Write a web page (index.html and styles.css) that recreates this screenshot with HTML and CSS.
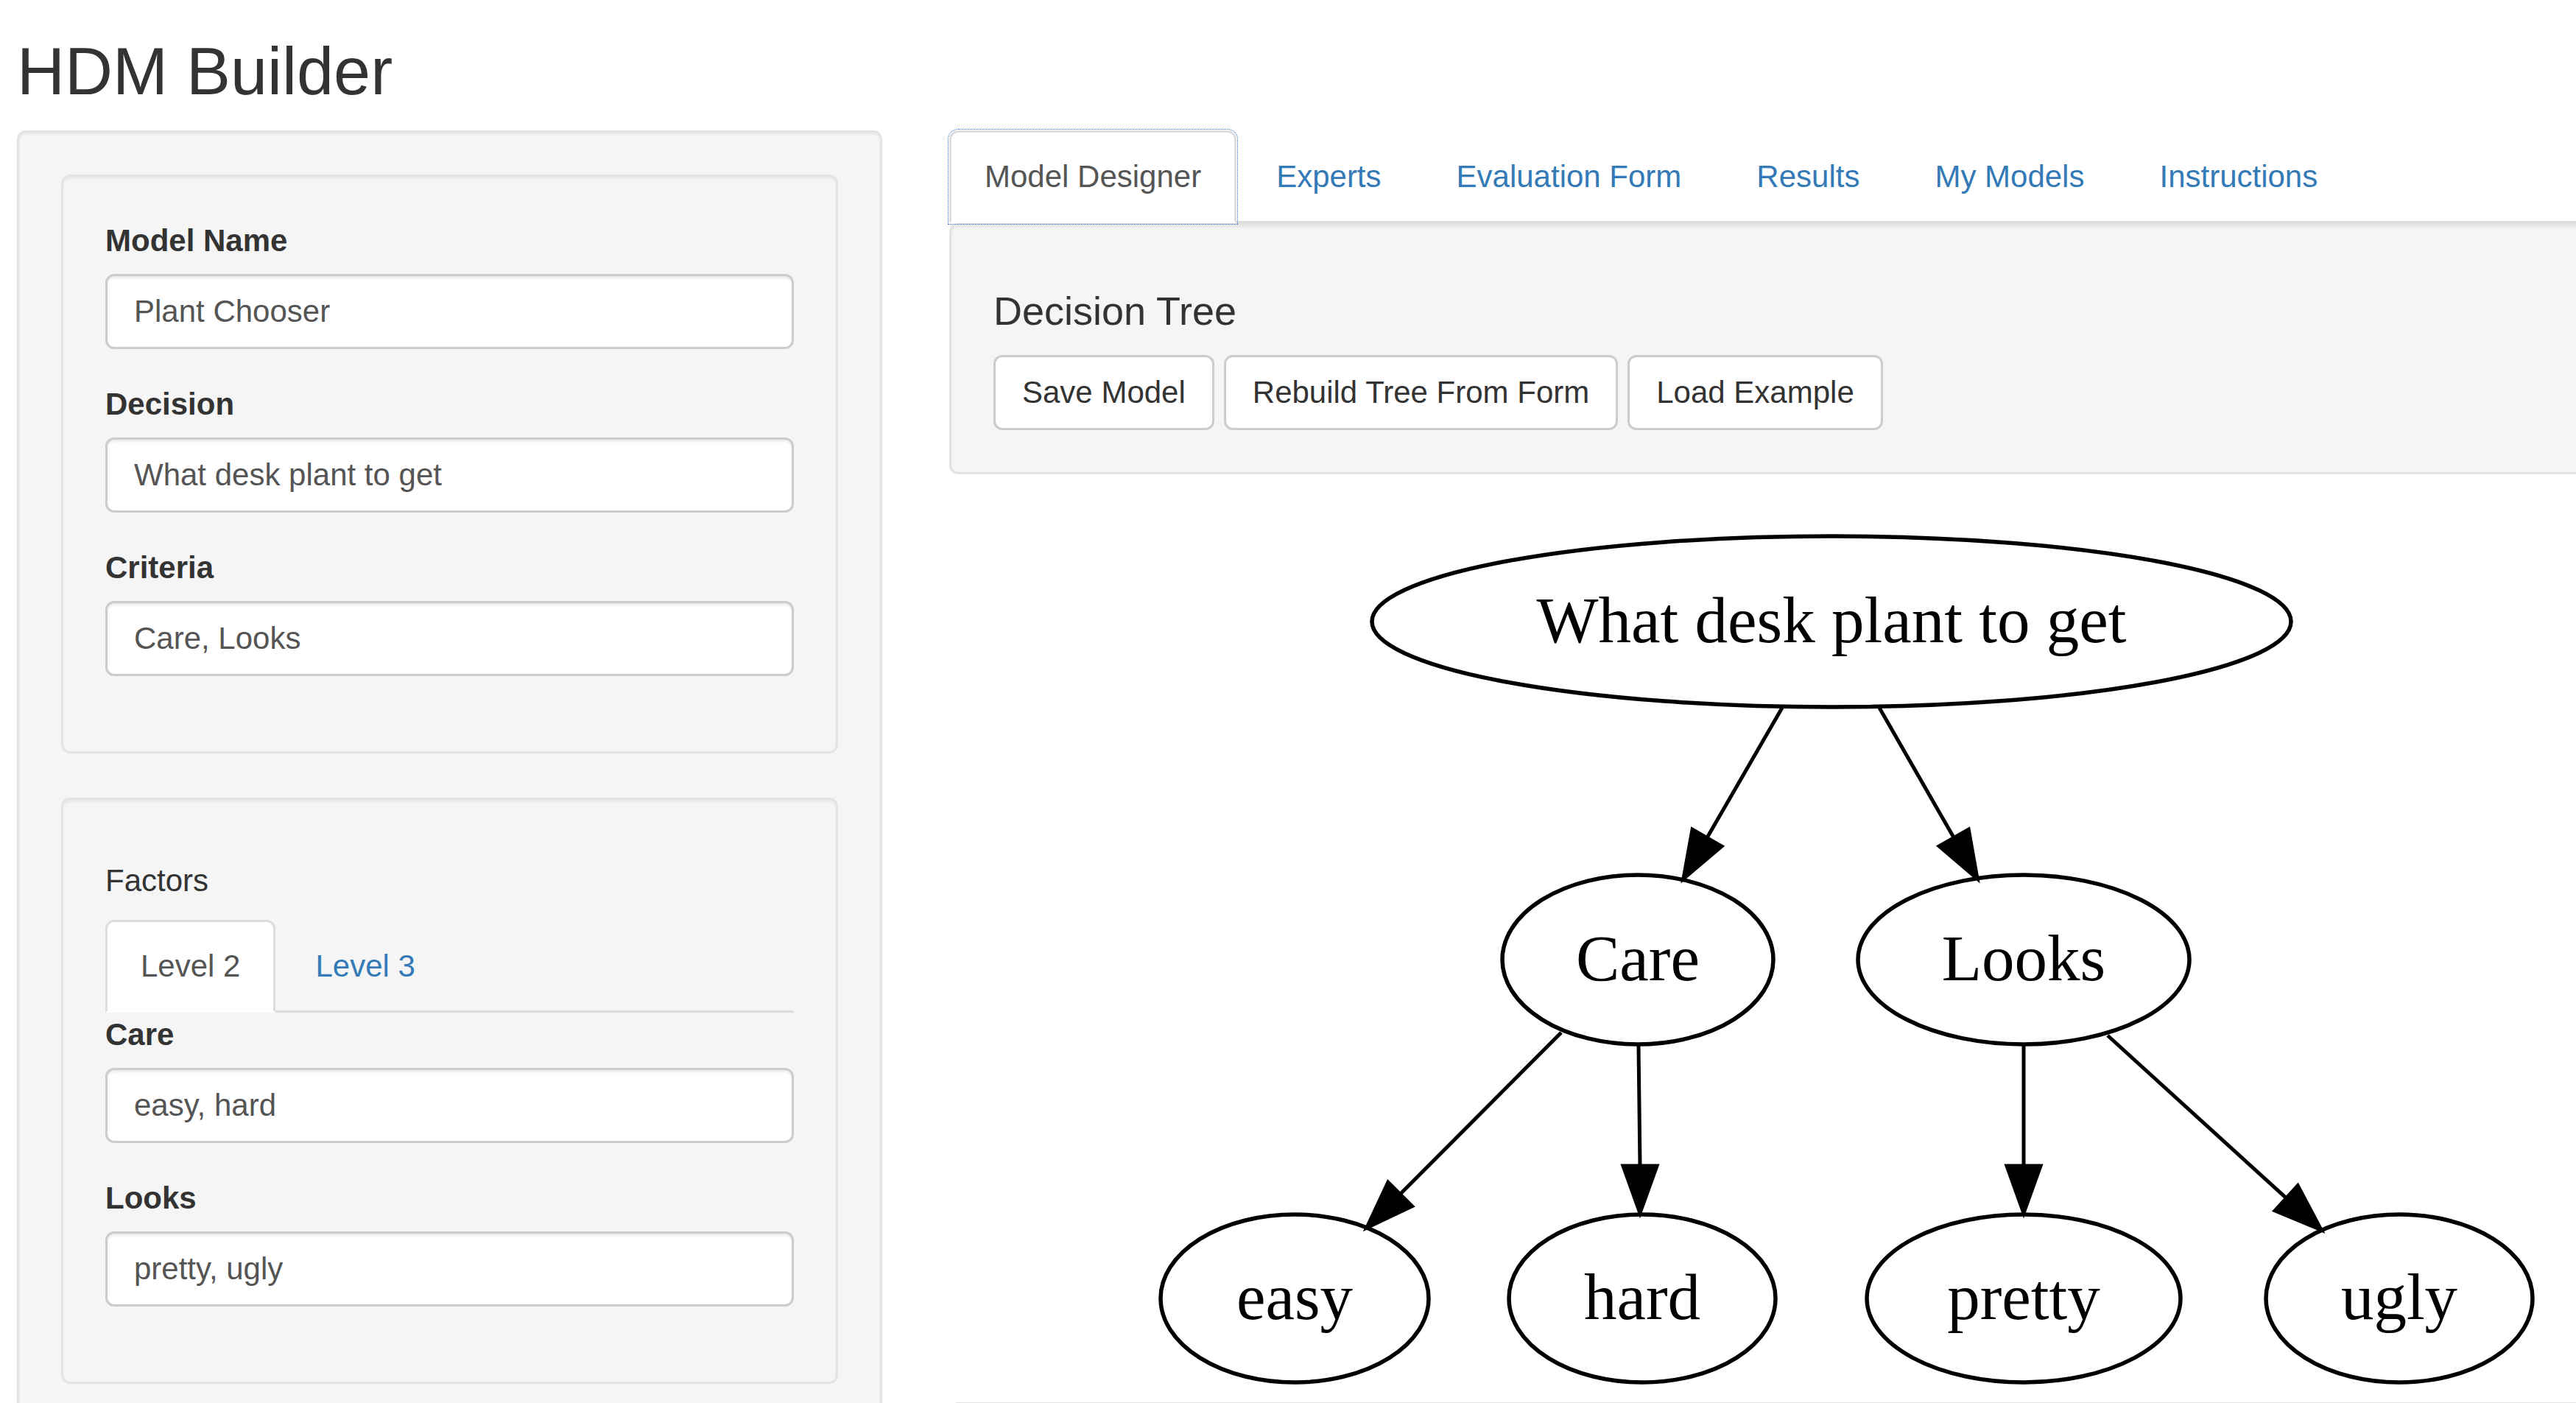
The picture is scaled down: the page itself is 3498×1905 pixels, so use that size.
FILE: index.html
```html
<!DOCTYPE html>
<html lang="en">
<head>
<meta charset="utf-8">
<title>HDM Builder</title>
<link rel="stylesheet" href="styles.css">
</head>
<body>
<div class="page">
  <h2 class="title">HDM Builder</h2>
  <div class="layout">
    <aside class="well sidebar">
      <div class="well inner-well">
        <div class="form-group">
          <label class="control-label">Model Name</label>
          <input class="form-control" type="text" value="Plant Chooser">
        </div>
        <div class="form-group">
          <label class="control-label">Decision</label>
          <input class="form-control" type="text" value="What desk plant to get">
        </div>
        <div class="form-group">
          <label class="control-label">Criteria</label>
          <input class="form-control" type="text" value="Care, Looks">
        </div>
      </div>
      <div class="well inner-well">
        <h5 class="subhead">Factors</h5>
        <ul class="nav-tabs">
          <li class="tab active"><a>Level 2</a></li>
          <li class="tab"><a>Level 3</a></li>
        </ul>
        <div class="tab-content">
          <div class="form-group">
            <label class="control-label">Care</label>
            <input class="form-control" type="text" value="easy, hard">
          </div>
          <div class="form-group">
            <label class="control-label">Looks</label>
            <input class="form-control" type="text" value="pretty, ugly">
          </div>
        </div>
      </div>
    </aside>
    <main class="main">
      <ul class="nav-tabs">
        <li class="tab active focused"><a>Model Designer</a></li>
        <li class="tab"><a>Experts</a></li>
        <li class="tab"><a>Evaluation Form</a></li>
        <li class="tab"><a>Results</a></li>
        <li class="tab"><a>My Models</a></li>
        <li class="tab"><a>Instructions</a></li>
      </ul>
      <div class="well tool-well">
        <h4 class="section-title">Decision Tree</h4>
        <div class="btn-row">
          <button class="btn" type="button">Save Model</button>
          <button class="btn" type="button">Rebuild Tree From Form</button>
          <button class="btn" type="button">Load Example</button>
        </div>
      </div>
      <div class="graph">
        <svg class="graph-svg" width="2394" height="1200" viewBox="1289 703 2394 1200" xmlns="http://www.w3.org/2000/svg">
          <g class="edges" stroke="#000" stroke-width="5" fill="none">
            <line x1="2420" y1="960" x2="2318" y2="1136.6"/>
            <line x1="2552" y1="960" x2="2653.2" y2="1136.5"/>
            <line x1="2120" y1="1401" x2="1901.2" y2="1620.6"/>
            <line x1="2225" y1="1419" x2="2227" y2="1582"/>
            <line x1="2748" y1="1419" x2="2748" y2="1582"/>
            <line x1="2862" y1="1405" x2="3104.7" y2="1625.9"/>
          </g>
          <g class="heads" fill="#000" stroke="#000" stroke-width="5" stroke-linejoin="miter">
            <polygon points="2286,1192 2337.9,1148.1 2298.1,1125.1"/>
            <polygon points="2685,1192 2673.2,1125.1 2633.2,1147.9"/>
            <polygon points="1856,1666 1917.5,1636.8 1884.9,1604.4"/>
            <polygon points="2227,1646 2250,1582 2204,1582"/>
            <polygon points="2748,1646 2771,1582 2725,1582"/>
            <polygon points="3152,1669 3089.2,1642.9 3120.2,1608.9"/>
          </g>
          <g class="nodes" stroke="#000" stroke-width="5.5" fill="none">
            <ellipse cx="2487" cy="843" rx="624" ry="116"/>
            <ellipse cx="2224" cy="1302" rx="184" ry="115"/>
            <ellipse cx="2748" cy="1302" rx="225" ry="115"/>
            <ellipse cx="1758" cy="1762" rx="182" ry="114"/>
            <ellipse cx="2230" cy="1762" rx="181" ry="114"/>
            <ellipse cx="2748" cy="1762" rx="213" ry="114"/>
            <ellipse cx="3258" cy="1762" rx="181" ry="114"/>
          </g>
          <g class="labels" text-anchor="middle">
            <text x="2487" y="871">What desk plant to get</text>
            <text x="2224" y="1330">Care</text>
            <text x="2748" y="1330">Looks</text>
            <text x="1758" y="1790">easy</text>
            <text x="2230" y="1790">hard</text>
            <text x="2748" y="1790">pretty</text>
            <text x="3258" y="1790">ugly</text>
          </g>
        </svg>
      </div>
      <div class="well next-well"></div>
    </main>
  </div>
</div>
</body>
</html>
```
FILE: styles.css
```css
html, body {
  margin: 0;
  padding: 0;
  overflow: hidden;
  background: #fff;
}

body {
  font-family: "Liberation Sans", Arial, Helvetica, sans-serif;
  font-size: 42px;
  line-height: 60px;
  color: #333;
}

.page {
  padding-left: 23px;
  width: 3800px;
}

.title {
  margin: 48px 0 30px;
  font-size: 90px;
  line-height: 99px;
  font-weight: 400;
  color: #333;
}

.layout {
  display: flex;
  align-items: flex-start;
  gap: 91px;
}

.well {
  background: #f5f5f5;
  border: 3px solid #e3e3e3;
  border-radius: 12px;
  box-shadow: inset 0 3px 3px rgba(0, 0, 0, 0.05);
  padding: 57px;
  margin-bottom: 60px;
}

.sidebar {
  width: 1175px;
  box-sizing: border-box;
  flex: none;
}

.inner-well {
  margin-bottom: 60px;
}

.form-group {
  margin-bottom: 45px;
}

.control-label {
  display: block;
  font-weight: 700;
  margin-bottom: 15px;
  line-height: 60px;
}

.form-control {
  display: block;
  box-sizing: border-box;
  width: 100%;
  height: 102px;
  padding: 18px 36px;
  font-family: "Liberation Sans", Arial, Helvetica, sans-serif;
  font-size: 42px;
  line-height: 60px;
  color: #555;
  background: #fff;
  border: 3px solid #ccc;
  border-radius: 12px;
  box-shadow: inset 0 3px 3px rgba(0, 0, 0, 0.075);
  margin: 0;
  outline: none;
}

.subhead {
  margin: 30px 0;
  font-size: 42px;
  line-height: 46.2px;
  font-weight: 400;
}

.nav-tabs {
  display: flex;
  list-style: none;
  margin: 0;
  padding: 0;
  border-bottom: 3px solid #ddd;
}

.tab {
  margin-bottom: -3px;
}

.tab a {
  display: block;
  padding: 30px 45px;
  margin-right: 6px;
  line-height: 60px;
  border: 3px solid transparent;
  border-radius: 12px 12px 0 0;
  color: #337ab7;
  text-decoration: none;
}

.tab.active a {
  color: #555;
  background: #fff;
  border-color: #ddd #ddd transparent;
}

.tab.focused a {
  outline: 1px dotted #1f6fc5;
  outline-offset: 1px;
}

.main {
  width: 2394px;
  flex: none;
}

.tool-well {
  border-radius: 12px;
}

.section-title {
  margin: 30px 0;
  font-size: 54px;
  line-height: 59.4px;
  font-weight: 400;
  color: #333;
}

.btn-row {
  display: flex;
  gap: 13px;
}

.btn {
  height: 102px;
  padding: 18px 36px;
  font-family: "Liberation Sans", Arial, Helvetica, sans-serif;
  font-size: 42px;
  line-height: 60px;
  color: #333;
  background: #fff;
  border: 3px solid #ccc;
  border-radius: 12px;
  margin: 0;
  box-sizing: border-box;
}

.graph {
  height: 1200px;
}

.graph-svg {
  display: block;
}

.labels {
  font-family: "Liberation Serif", "Times New Roman", serif;
  font-size: 89px;
  fill: #000;
}

.next-well {
  height: 300px;
  box-sizing: border-box;
}
```
